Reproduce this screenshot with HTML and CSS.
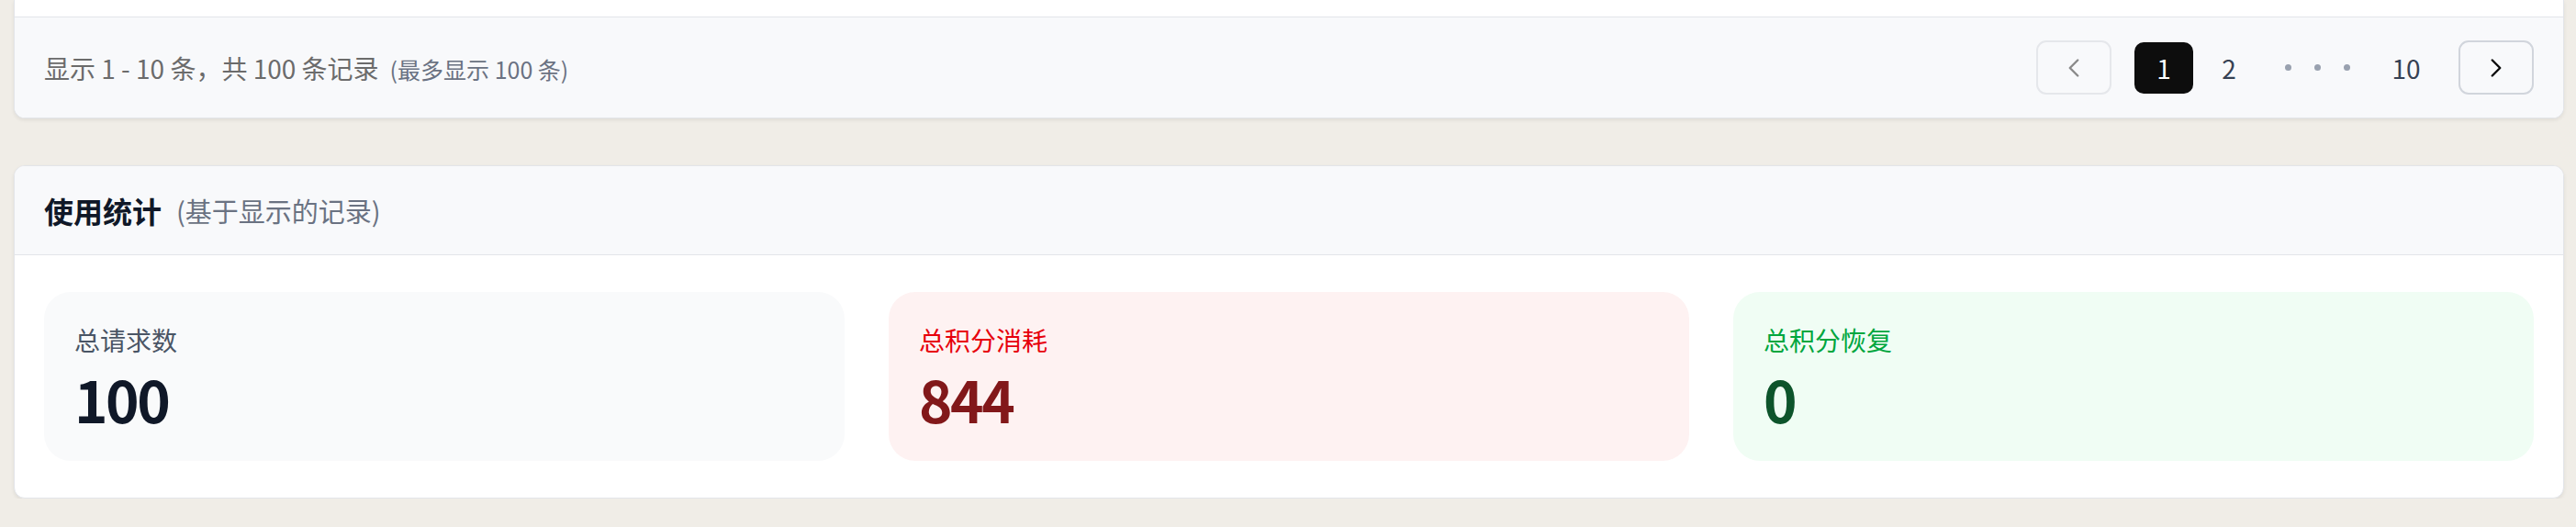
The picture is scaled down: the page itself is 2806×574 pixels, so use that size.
FILE: index.html
```html
<!DOCTYPE html>
<html lang="zh-CN">
<head>
<meta charset="utf-8">
<title>使用记录</title>
<link rel="stylesheet" href="styles.css">
</head>
<body>
<div class="layout">
  <section class="card list-card">
    <div class="table-tail"></div>
    <div class="list-footer">
      <p class="range">显示 1 - 10 条，共 100 条记录<span class="range-note">(最多显示 100 条)</span></p>
      <nav class="pager">
        <button class="pager-arrow is-disabled" aria-label="上一页">
          <svg viewBox="0 0 24 24" fill="none" stroke="currentColor" stroke-width="1.7" stroke-linecap="round" stroke-linejoin="round"><path d="m15 18-6-6 6-6"/></svg>
        </button>
        <div class="pager-pages">
          <button class="page-btn is-current">1</button>
          <button class="page-btn">2</button>
          <span class="page-gap"><i></i><i></i><i></i></span>
          <button class="page-btn">10</button>
        </div>
        <button class="pager-arrow" aria-label="下一页">
          <svg viewBox="0 0 24 24" fill="none" stroke="currentColor" stroke-width="1.7" stroke-linecap="round" stroke-linejoin="round"><path d="m9 18 6-6-6-6"/></svg>
        </button>
      </nav>
    </div>
  </section>

  <section class="card stats-card">
    <header class="stats-head">
      <h2 class="stats-title">使用统计</h2>
      <span class="stats-sub">(基于显示的记录)</span>
    </header>
    <div class="stats-grid">
      <div class="stat stat-neutral">
        <div class="stat-label">总请求数</div>
        <div class="stat-value">100</div>
      </div>
      <div class="stat stat-red">
        <div class="stat-label">总积分消耗</div>
        <div class="stat-value">844</div>
      </div>
      <div class="stat stat-green">
        <div class="stat-label">总积分恢复</div>
        <div class="stat-value">0</div>
      </div>
    </div>
  </section>
</div>
</body>
</html>
```

FILE: styles.css
```css
* { box-sizing: border-box; }

html, body {
  margin: 0;
  padding: 0;
}

body {
  background: #f0ede7;
  font-family: "Noto Sans CJK SC", "Noto Sans", sans-serif;
  color: #101828;
}

.layout {
  display: flex;
  flex-direction: column;
  gap: 51px;
  padding: 0 13px 0 15px;
}

.card {
  background: #ffffff;
  border: 1px solid #e3e5e9;
  border-radius: 12px;
  box-shadow: 0 2px 4px rgba(0, 0, 0, 0.07);
  overflow: hidden;
}

.list-card {
  border-top: 0;
  border-top-left-radius: 0;
  border-top-right-radius: 0;
}

.table-tail {
  height: 18px;
  background: #ffffff;
}

.list-footer {
  display: flex;
  align-items: center;
  justify-content: space-between;
  height: 110px;
  padding: 0 32px;
  background: #f8f9fb;
  border-top: 1px solid #e3e5e9;
}

.range {
  margin: 0;
  font-size: 28px;
  color: #6b6b6b;
}

.range-note {
  margin-left: 12px;
  font-size: 25px;
  color: #6a7282;
}

.pager {
  display: flex;
  align-items: center;
  gap: 25px;
}

.pager-pages {
  display: flex;
  align-items: center;
  gap: 7px;
}

button {
  font-family: inherit;
  margin: 0;
  padding: 0;
  background: none;
  border: 0;
}

.pager-arrow {
  display: flex;
  align-items: center;
  justify-content: center;
  width: 82px;
  height: 59px;
  border: 2px solid #d1d5dc;
  border-radius: 11px;
  color: #0a0a0a;
}

.pager-arrow svg {
  width: 34px;
  height: 34px;
}

.pager-arrow.is-disabled {
  border-color: #e5e7eb;
  color: #8a8a8a;
}

.page-btn {
  width: 64px;
  height: 56px;
  border-radius: 10px;
  font-size: 28px;
  color: #364153;
}

.page-btn.is-current {
  background: #0d0d0d;
  color: #ffffff;
}

.page-gap {
  display: flex;
  align-items: center;
  justify-content: center;
  gap: 25px;
  width: 115px;
  height: 56px;
}

.page-gap i {
  width: 7px;
  height: 7px;
  border-radius: 50%;
  background: #99a1af;
}

.stats-head {
  display: flex;
  align-items: center;
  height: 97px;
  padding: 0 32px;
  background: #f8f9fb;
  border-bottom: 1px solid #e3e5e9;
}

.stats-title {
  margin: 0;
  font-size: 32px;
  font-weight: 600;
  color: #101828;
}

.stats-sub {
  margin-left: 16px;
  font-size: 29px;
  color: #6a7282;
}

.stats-grid {
  display: grid;
  grid-template-columns: repeat(3, 1fr);
  gap: 48px;
  padding: 40px 32px;
}

.stat {
  height: 184px;
  padding: 32px 33px 0;
  border-radius: 29px;
}

.stat-label {
  font-size: 28px;
  line-height: 40px;
}

.stat-value {
  margin-top: 12px;
  font-size: 62px;
  font-weight: 700;
  line-height: 64px;
  letter-spacing: -2.5px;
}

.stat-neutral { background: #f9fafb; }
.stat-neutral .stat-label { color: #4a5565; }
.stat-neutral .stat-value { color: #101828; }

.stat-red { background: #fef2f2; }
.stat-red .stat-label { color: #e7000b; }
.stat-red .stat-value { color: #82181a; }

.stat-green { background: #f0fdf4; }
.stat-green .stat-label { color: #00a63e; }
.stat-green .stat-value { color: #0d542b; }
```
